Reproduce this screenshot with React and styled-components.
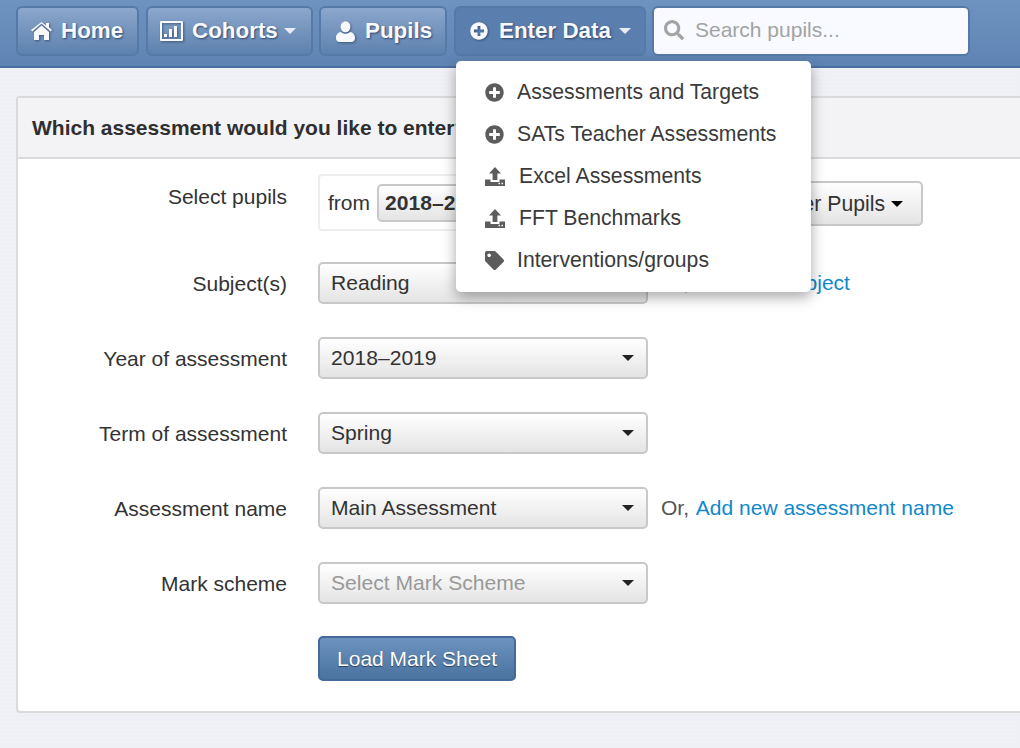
import React from "react";
import styled, { createGlobalStyle } from "styled-components";
import { FaPlusCircle, FaSearch, FaTag } from "react-icons/fa";

const GlobalStyle = createGlobalStyle`
  html, body {
    margin: 0;
    padding: 0;
    height: 748px;
    overflow: hidden;
    font-family: "Liberation Sans", Arial, sans-serif;
    color: #333333;
    background-color: #eff0f6;
    background-image: radial-gradient(#f1f1f7 1px, transparent 1px);
    background-size: 4px 4px;
  }
`;

const NavBar = styled.nav`
  position: relative;
  box-sizing: border-box;
  height: 68px;
  padding: 6px 16px 0;
  display: flex;
  gap: 7px;
  background: linear-gradient(#6f93c0, #5f84b3);
  border-bottom: 2px solid #4a6f9e;
`;

const NavButton = styled.div`
  box-sizing: border-box;
  height: 50px;
  width: ${(p) => p.$width}px;
  margin-right: ${(p) => p.$trim || 0}px;
  display: flex;
  align-items: center;
  gap: ${(p) => p.$gap || 9}px;
  padding-left: ${(p) => p.$pad || 13}px;
  border: 2px solid #557aa8;
  border-radius: 6px;
  color: #f7f9fc;
  font-size: 22.4px;
  font-weight: bold;
  text-shadow: 1px 1px 2px rgba(30, 50, 80, 0.75);
  background: ${(p) =>
    p.$active ? "#5a7fae" : "linear-gradient(#8ba7cc, #5d81ae)"};
  svg {
    flex: none;
    filter: drop-shadow(1px 1px 1px rgba(30, 50, 80, 0.6));
  }
`;

const NavCaret = styled.span`
  width: 0;
  height: 0;
  margin-left: -3px;
  border-left: 6.5px solid transparent;
  border-right: 6.5px solid transparent;
  border-top: 6.5px solid #e8edf5;
`;

const SearchBox = styled.div`
  box-sizing: border-box;
  width: 318px;
  height: 50px;
  margin-left: -1px;
  display: flex;
  align-items: center;
  gap: 11px;
  padding: 0 0 3px 10px;
  background: #f8faff;
  border: 2px solid #557aa8;
  border-radius: 6px;
  color: #a3a3a3;
  font-size: 21px;
`;

const Menu = styled.ul`
  position: absolute;
  z-index: 5;
  left: 456px;
  top: 61px;
  box-sizing: border-box;
  width: 355px;
  height: 231px;
  margin: 0;
  padding: 10px 0 0 29px;
  list-style: none;
  background: #ffffff;
  border-radius: 5px;
  box-shadow: 0 5px 14px rgba(0, 0, 0, 0.35);
`;

const MenuItem = styled.li`
  height: 42px;
  display: flex;
  align-items: center;
  gap: ${(p) => p.$gap}px;
  font-size: 21.2px;
  color: #3a3a3a;
  white-space: nowrap;
  svg {
    flex: none;
    color: #5c5c5c;
  }
`;

const Panel = styled.section`
  box-sizing: border-box;
  margin: 28px 0 0 16px;
  background: #ffffff;
  border: 2px solid #dadada;
  border-right: none;
  border-radius: 4px 0 0 4px;
`;

const PanelHeader = styled.h2`
  box-sizing: border-box;
  height: 61px;
  margin: 0;
  padding: 0 0 0 14px;
  display: flex;
  align-items: center;
  background: #f3f3f6;
  border-bottom: 2px solid #dadada;
  font-size: 21px;
  font-weight: bold;
  color: #2f2f2f;
`;

const FormBody = styled.div`
  display: flex;
  flex-direction: column;
  padding: 15px 0 30px;
`;

const FormRow = styled.div`
  display: grid;
  grid-template-columns: 269px 1fr;
  column-gap: 31px;
  align-items: center;
  margin-bottom: ${(p) => p.$after}px;
`;

const FieldLabel = styled.label`
  text-align: right;
  font-size: 21px;
  color: #333333;
  align-self: ${(p) => (p.$top ? "start" : "center")};
  padding-top: ${(p) => (p.$top ? 11 : 2)}px;
`;

const FieldLine = styled.div`
  display: flex;
  align-items: center;
  font-size: 21px;
`;

const PupilBox = styled.div`
  box-sizing: border-box;
  width: 420px;
  height: 57px;
  display: flex;
  align-items: center;
  padding-left: 8px;
  gap: 7px;
  border: 2px solid #eeeeee;
  border-radius: 4px;
`;

const DropButton = styled.div`
  position: relative;
  box-sizing: border-box;
  width: ${(p) => p.$width}px;
  height: ${(p) => p.$height || 42}px;
  display: flex;
  align-items: center;
  padding-left: ${(p) => p.$pad || 11}px;
  background: linear-gradient(#ffffff, #e4e4e4);
  border: 2px solid #c8c8c8;
  border-radius: 5px;
  font-size: 21.1px;
  font-weight: ${(p) => (p.$bold ? "bold" : "normal")};
  color: ${(p) => (p.$muted ? "#999999" : "#333333")};
  white-space: nowrap;
`;

const OtherButton = styled.div`
  box-sizing: border-box;
  width: 185px;
  height: 45px;
  margin-top: 2px;
  display: flex;
  align-items: center;
  justify-content: flex-end;
  gap: 6px;
  padding-right: 18px;
  background: linear-gradient(#ffffff, #e4e4e4);
  border: 2px solid #c8c8c8;
  border-radius: 5px;
  font-size: 21.2px;
  white-space: nowrap;
`;

const Caret = styled.span`
  position: absolute;
  right: 12px;
  top: 50%;
  margin-top: -3px;
  width: 0;
  height: 0;
  border-left: 6px solid transparent;
  border-right: 6px solid transparent;
  border-top: 6px solid #222222;
`;

const InlineCaret = styled.span`
  width: 0;
  height: 0;
  border-left: 6px solid transparent;
  border-right: 6px solid transparent;
  border-top: 6px solid #000000;
`;

const Aside = styled.span`
  margin-left: 13px;
  color: #555555;
`;

const TextLink = styled.a`
  margin-left: 1px;
  color: #0f88cc;
  text-decoration: none;
`;

const LoadButton = styled.button`
  box-sizing: border-box;
  width: 198px;
  height: 45px;
  padding: 0;
  font-family: inherit;
  font-size: 21px;
  color: #ffffff;
  text-shadow: 0 1px 1px rgba(20, 40, 70, 0.7);
  background: linear-gradient(#6d92bf, #4a739f);
  border: 2px solid #44699a;
  border-radius: 5px;
`;

const HomeIcon = () => (
  <svg width="21" height="18" viewBox="0 0 21 18" fill="currentColor">
    <path d="M15 1h3v4.200l3 2.800-1.200 1.400-9.300-8-9.300 8L0 8l10.500-8L15 3.500z" />
    <path d="M10.500 3.600 18 10v8h-5v-5H8v5H3v-8z" />
  </svg>
);

const ChartIcon = () => (
  <svg width="23" height="20" viewBox="0 0 23 20" fill="currentColor">
    <path
      fillRule="evenodd"
      d="M1 0h21a1 1 0 0 1 1 1v18a1 1 0 0 1-1 1H1a1 1 0 0 1-1-1V1a1 1 0 0 1 1-1zm1 2v16h19V2z"
    />
    <path d="M4 13h3v3H4zM9 8h3v8H9zM14 5h3v11h-3z" />
  </svg>
);

const UserIcon = () => (
  <svg width="19" height="21" viewBox="0 0 20 22" fill="currentColor">
    <ellipse cx="10" cy="6" rx="5.200" ry="5.800" />
    <path d="M5 11.500c1.300 1.200 3 1.900 5 1.900s3.700-.7 5-1.900c3 .3 5 2.800 5 6.500 0 2.400-1.500 4-3.500 4h-13C1.500 22 0 20.400 0 18c0-3.700 2-6.200 5-6.500z" />
  </svg>
);

const UploadIcon = () => (
  <svg width="20" height="19" viewBox="0 0 20 19" fill="currentColor">
    <path d="M10 0l6 6.500h-3.600V13H7.600V6.500H4z" />
    <path
      fillRule="evenodd"
      d="M0 12.500h5.500V15h9v-2.500H20V19H0zM13.500 15.800v1.500H15v-1.500zM16.500 15.800v1.500H18v-1.500z"
    />
  </svg>
);

export default function App() {
  return (
    <>
      <GlobalStyle />
      <NavBar>
        <NavButton $width={123}>
          <HomeIcon />
          Home
        </NavButton>
        <NavButton $width={167} $pad={12} $trim={-1}>
          <ChartIcon />
          Cohorts
          <NavCaret />
        </NavButton>
        <NavButton $width={128} $pad={15} $gap={10}>
          <UserIcon />
          Pupils
        </NavButton>
        <NavButton $width={192} $pad={14} $gap={11} $active>
          <FaPlusCircle size={18} />
          Enter Data
          <NavCaret />
        </NavButton>
        <SearchBox>
          <FaSearch size={20} />
          Search pupils...
        </SearchBox>
      </NavBar>

      <Menu>
        <MenuItem $gap={13}>
          <FaPlusCircle size={19} />
          Assessments and Targets
        </MenuItem>
        <MenuItem $gap={13}>
          <FaPlusCircle size={19} />
          SATs Teacher Assessments
        </MenuItem>
        <MenuItem $gap={14}>
          <UploadIcon />
          Excel Assessments
        </MenuItem>
        <MenuItem $gap={14}>
          <UploadIcon />
          FFT Benchmarks
        </MenuItem>
        <MenuItem $gap={13}>
          <FaTag size={19} />
          Interventions/groups
        </MenuItem>
      </Menu>

      <Panel>
        <PanelHeader>Which assessment would you like to enter?</PanelHeader>
        <FormBody>
          <FormRow $after={31}>
            <FieldLabel $top>Select pupils</FieldLabel>
            <FieldLine>
              <PupilBox>
                from
                <DropButton $width={200} $height={38} $pad={6} $bold>
                  2018–2019
                  <Caret />
                </DropButton>
              </PupilBox>
              <OtherButton>
                Other Pupils
                <InlineCaret />
              </OtherButton>
            </FieldLine>
          </FormRow>
          <FormRow $after={33}>
            <FieldLabel>Subject(s)</FieldLabel>
            <FieldLine>
              <DropButton $width={330}>
                Reading
                <Caret />
              </DropButton>
              <Aside>
                Or, <TextLink>Add new subject</TextLink>
              </Aside>
            </FieldLine>
          </FormRow>
          <FormRow $after={33}>
            <FieldLabel>Year of assessment</FieldLabel>
            <FieldLine>
              <DropButton $width={330}>
                2018–2019
                <Caret />
              </DropButton>
            </FieldLine>
          </FormRow>
          <FormRow $after={33}>
            <FieldLabel>Term of assessment</FieldLabel>
            <FieldLine>
              <DropButton $width={330}>
                Spring
                <Caret />
              </DropButton>
            </FieldLine>
          </FormRow>
          <FormRow $after={33}>
            <FieldLabel>Assessment name</FieldLabel>
            <FieldLine>
              <DropButton $width={330}>
                Main Assessment
                <Caret />
              </DropButton>
              <Aside>
                Or, <TextLink>Add new assessment name</TextLink>
              </Aside>
            </FieldLine>
          </FormRow>
          <FormRow $after={32}>
            <FieldLabel>Mark scheme</FieldLabel>
            <FieldLine>
              <DropButton $width={330} $muted>
                Select Mark Scheme
                <Caret />
              </DropButton>
            </FieldLine>
          </FormRow>
          <FormRow $after={0}>
            <span />
            <FieldLine>
              <LoadButton>Load Mark Sheet</LoadButton>
            </FieldLine>
          </FormRow>
        </FormBody>
      </Panel>
    </>
  );
}
